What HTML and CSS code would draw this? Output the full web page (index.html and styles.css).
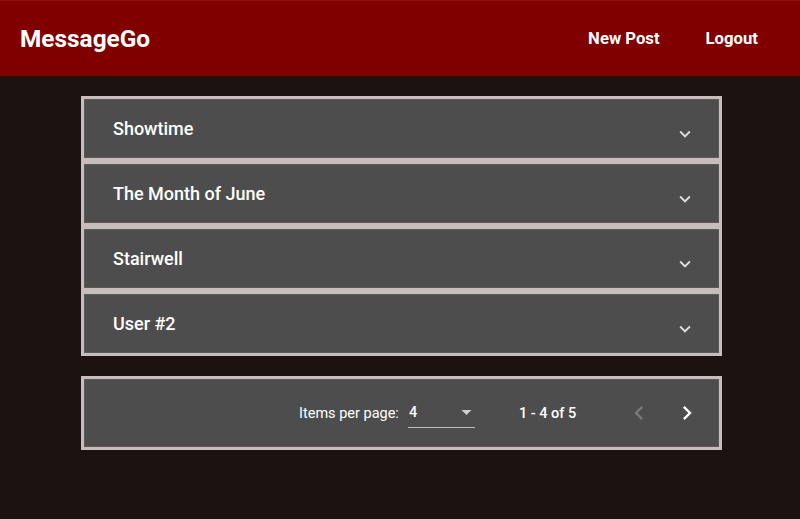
FILE: index.html
```html
<!DOCTYPE html>
<html>
<head>
<meta charset="utf-8">
<link rel="stylesheet" href="styles.css">
</head>
<body>
<header class="toolbar">
  <span class="brand">MessageGo</span>
  <nav class="nav">
    <a class="nav-link">New Post</a>
    <a class="nav-link">Logout</a>
  </nav>
</header>
<main class="content">
  <div class="accordion">
    <div class="panel"><span class="panel-title">Showtime</span><svg class="chev" viewBox="0 0 24 24"><path d="M7.41 8.59 12 13.17l4.59-4.58L18 10l-6 6-6-6z"/></svg></div>
    <div class="panel"><span class="panel-title">The Month of June</span><svg class="chev" viewBox="0 0 24 24"><path d="M7.41 8.59 12 13.17l4.59-4.58L18 10l-6 6-6-6z"/></svg></div>
    <div class="panel"><span class="panel-title">Stairwell</span><svg class="chev" viewBox="0 0 24 24"><path d="M7.41 8.59 12 13.17l4.59-4.58L18 10l-6 6-6-6z"/></svg></div>
    <div class="panel"><span class="panel-title">User #2</span><svg class="chev" viewBox="0 0 24 24"><path d="M7.41 8.59 12 13.17l4.59-4.58L18 10l-6 6-6-6z"/></svg></div>
  </div>
  <div class="paginator">
    <div class="pag-inner">
      <span class="pag-label">Items per page:</span>
      <div class="select">
        <span class="select-value">4</span>
        <svg class="select-arrow" viewBox="0 0 12 6"><path d="M0 0h12L6 6z"/></svg>
      </div>
      <span class="range">1 - 4 of 5</span>
      <svg class="pg-btn disabled" viewBox="0 0 24 24"><path d="M15.41 7.41 14 6l-6 6 6 6 1.41-1.41L10.83 12z"/></svg>
      <svg class="pg-btn" viewBox="0 0 24 24"><path d="M10 6 8.59 7.41 13.17 12l-4.58 4.59L10 18l6-6z"/></svg>
    </div>
  </div>
</main>
</body>
</html>
```
FILE: styles.css
```css
html, body {
  margin: 0;
  padding: 0;
}
body {
  background: #1c1211;
  font-family: Roboto, "Liberation Sans", sans-serif;
  color: #fff;
  height: 519px;
  overflow: hidden;
}
.toolbar {
  height: 76px;
  background: #800000;
  display: flex;
  align-items: center;
  justify-content: space-between;
  padding: 0 42px 0 20px;
  box-sizing: border-box;
  border-top: 1px solid #8c1010;
}
.brand {
  font-size: 24.4px;
  font-weight: 700;
}
.nav {
  display: flex;
  gap: 46px;
}
.nav-link {
  font-size: 16.7px;
  font-weight: 700;
  color: #fff;
}
.content {
  width: 641px;
  margin: 20px 0 0 81px;
  display: flex;
  flex-direction: column;
  gap: 20px;
}
.accordion {
  background: #c6bebe;
  padding: 3px;
  display: flex;
  flex-direction: column;
  gap: 6px;
}
.panel {
  height: 59px;
  box-sizing: border-box;
  background: #4d4d4d;
  border: 1px solid #5e5a5a;
  display: flex;
  align-items: center;
  padding: 0 22px 0 28px;
}
.panel-title {
  flex: 1;
  font-size: 18px;
  font-weight: 500;
  margin-top: -1px;
}
.chev {
  width: 22px;
  height: 22px;
  fill: #dcdcdc;
  margin-top: 10px;
}
.paginator {
  background: #c6bebe;
  padding: 3px;
}
.pag-inner {
  height: 68px;
  box-sizing: border-box;
  background: #4d4d4d;
  border: 1px solid #5e5a5a;
  display: flex;
  align-items: center;
  padding-left: 214px;
  font-size: 14.5px;
}
.pag-label {
  margin-right: 9px;
}
.select {
  width: 67px;
  height: 26px;
  box-sizing: border-box;
  border-bottom: 1px solid #bdbdbd;
  display: flex;
  align-items: center;
  justify-content: space-between;
  padding: 0 3px 0 1px;
  margin-top: 4px;
}
.select-value {
  font-size: 14.5px;
  font-weight: 500;
  margin-top: -4px;
}
.select-arrow {
  width: 11px;
  height: 5px;
  fill: #d0d0d0;
  margin-top: -4px;
}
.range {
  margin-left: 44px;
  margin-right: 49px;
  font-weight: 500;
}
.pg-btn {
  width: 28px;
  height: 28px;
  fill: #ffffff;
  margin-left: 20px;
}
.pg-btn.disabled {
  fill: #7a7a7a;
  margin-left: 0;
}
```
